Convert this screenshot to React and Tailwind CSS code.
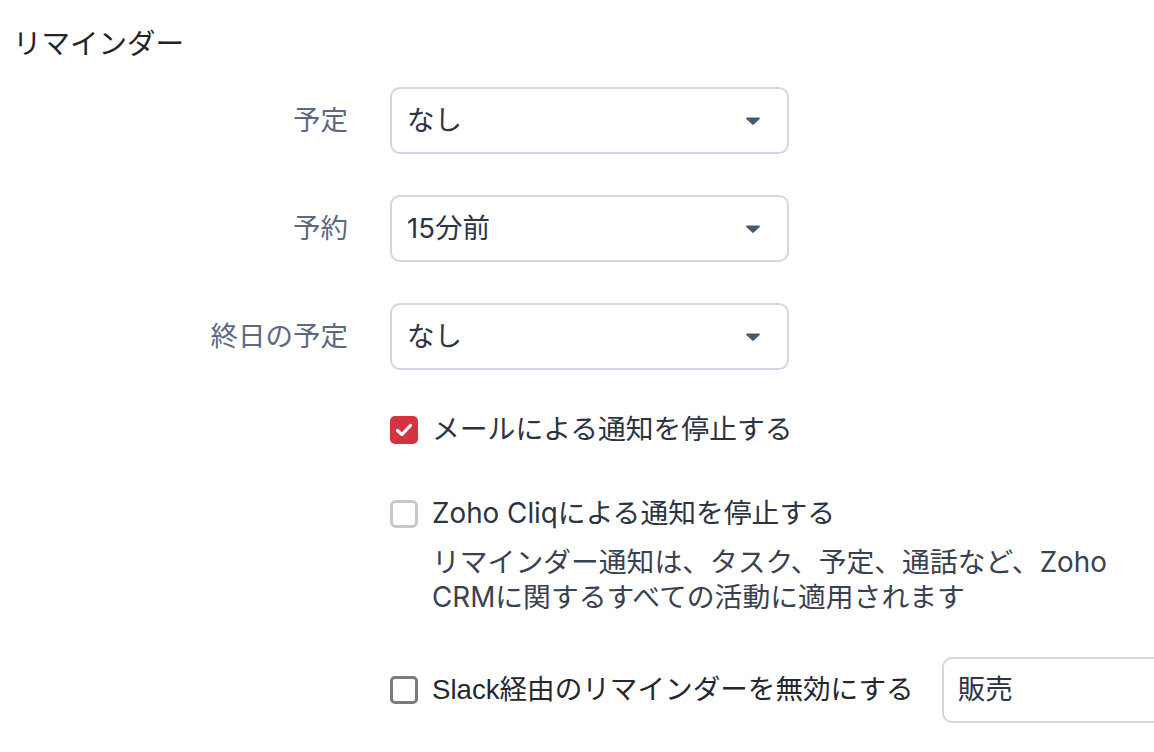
import React from "react";

const font = { fontFamily: 'Inter, "Noto Sans CJK JP", sans-serif' };

function Arrow() {
  return (
    <svg width="16" height="10" viewBox="0 0 16 10" className="shrink-0">
      <path d="M2 1.5 H14 a1 1 0 0 1 0.7 1.6 L8.8 8.6 a1.1 1.1 0 0 1 -1.6 0 L1.3 3.1 A1 1 0 0 1 2 1.5 Z" fill="#455a72" />
    </svg>
  );
}

function Select({ value }) {
  return (
    <div className="w-[399px] h-[67px] border-2 border-[#d2d5e3] rounded-[10px] flex items-center justify-between pl-[15px] pr-[26px] bg-white">
      <span className="text-[27.5px] text-[#2d3444] leading-none">{value}</span>
      <Arrow />
    </div>
  );
}

function Row({ label, value }) {
  return (
    <div className="flex items-center h-[67px]">
      <div className="w-[348px] text-right text-[27.5px] text-[#5d6882] leading-none">{label}</div>
      <div className="ml-[42px]">
        <Select value={value} />
      </div>
    </div>
  );
}

export default function App() {
  return (
    <div className="w-[1154px] h-[752px] overflow-hidden bg-white" style={font}>
      <div className="pt-[24px] pl-[13px] h-[63px] text-[28.5px] leading-[40px] text-[#222428]">リマインダー</div>
      <div className="flex flex-col gap-[41px] mt-[24px]">
        <Row label="予定" value="なし" />
        <Row label="予約" value="15分前" />
        <Row label="終日の予定" value="なし" />
      </div>
      <div className="pl-[390px]">
        <div className="mt-[40px] h-[40px] flex items-center">
          <div className="w-[28px] h-[28px] rounded-[5px] bg-[#d3343f] flex items-center justify-center shrink-0">
            <svg width="22" height="22" viewBox="0 0 22 22">
              <path d="M4.5 11.5 L9 15.5 L17.5 6.5" fill="none" stroke="white" strokeWidth="3.2" strokeLinecap="round" strokeLinejoin="round" />
            </svg>
          </div>
          <span className="ml-[14px] text-[27.8px] text-[#2d3340] leading-none">メールによる通知を停止する</span>
        </div>
        <div className="mt-[44px] h-[40px] flex items-center">
          <div className="w-[28px] h-[28px] rounded-[6px] border-[3px] border-[#c8c8c8] shrink-0" />
          <span className="ml-[14px] text-[27.8px] text-[#2d3340] leading-none">Zoho Cliqによる通知を停止する</span>
        </div>
        <div className="mt-[11px] pl-[42px] text-[27.8px] leading-[35px] text-[#3a4150]">
          <div>リマインダー通知は、タスク、予定、通話など、Zoho</div>
          <div>CRMに関するすべての活動に適用されます</div>
        </div>
        <div className="mt-[42px] h-[66px] flex items-center">
          <div className="w-[28px] h-[28px] rounded-[5px] border-[3px] border-[#7b7b7b] shrink-0" />
          <span className="ml-[14px] text-[27.6px] text-[#24272e] leading-none whitespace-nowrap" style={{ fontFamily: '"Liberation Sans", "Noto Sans CJK JP", sans-serif' }}>Slack経由のリマインダーを無効にする</span>
          <div className="ml-[28px] w-[300px] h-[66px] shrink-0 border-2 border-[#d2d5e3] rounded-[10px] flex items-center pl-[14px]">
            <span className="text-[27.5px] text-[#2d3444] leading-none">販売</span>
          </div>
        </div>
      </div>
    </div>
  );
}
